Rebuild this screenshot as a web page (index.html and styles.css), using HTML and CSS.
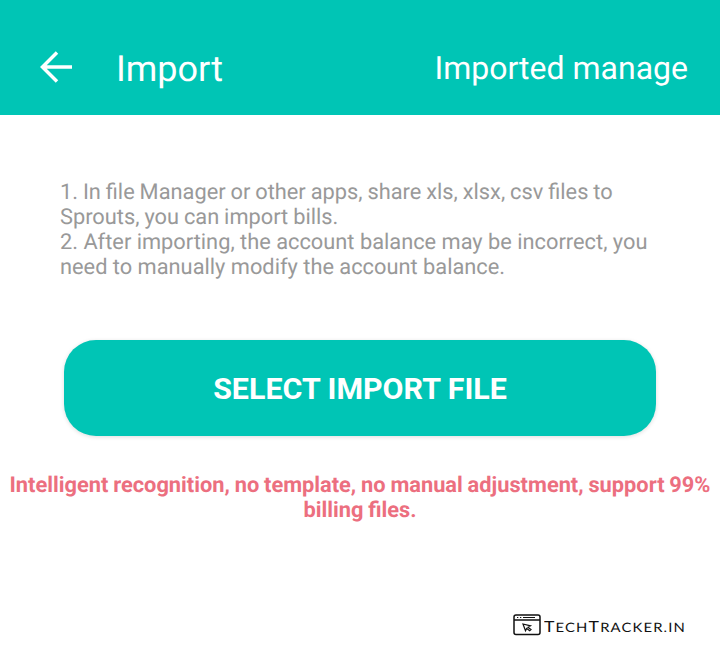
FILE: index.html
```html
<!DOCTYPE html>
<html lang="en">
<head>
<meta charset="utf-8">
<title>Import</title>
<link rel="stylesheet" href="styles.css">
</head>
<body>
<header class="bar">
  <svg class="back" viewBox="0 0 32 32" width="32" height="32"><path d="M17 1.5 2.5 16 17 30.5M3 16H32"/></svg>
  <h1 class="title">Import</h1>
  <a class="manage">Imported manage</a>
</header>
<main class="content">
  <div class="notes">
    <p class="tight">1. In file Manager or other apps, share xls, xlsx, csv files to<br>Sprouts, you can import bills.</p>
    <p>2. After importing, the account balance may be incorrect, you<br>need to manually modify the account balance.</p>
  </div>
  <button class="select">SELECT IMPORT FILE</button>
  <p class="hint">Intelligent recognition, no template, no manual adjustment, support 99%<br>billing files.</p>
</main>
<footer class="brand">
  <svg class="logo" viewBox="0 0 28 22" width="28" height="22">
    <rect x="1" y="1" width="26" height="19.5" rx="2"/><path d="M1 6H27"/><path class="dots" d="M4 3.5H5.3M7 3.5H8.3M10 3.5H22"/>
    <path class="cursor" d="m10 10 7.5 1.8-2.5 1.5 3 2.3-1.3 1.2-3-2.3-1.2 2.3Z"/>
  </svg>
  <span class="name"><b>T</b>ECH<b>T</b>RACKER.IN</span>
</footer>
</body>
</html>
```
FILE: styles.css
```css
* { box-sizing: border-box; }
body { margin: 0; height: 649px; display: flex; flex-direction: column; background: #fff; font-family: Roboto, sans-serif; overflow: hidden; text-rendering: geometricPrecision; }
h1, p { margin: 0; }
.bar { height: 115px; padding: 20px 32px 0 40px; display: flex; align-items: center; background: #00c5b5; color: #fff; }
.back { fill: none; stroke: #fff; stroke-width: 3.5; margin-top: -1px; }
.title { margin: 2px 0 0 44px; font-size: 36px; font-weight: 400; }
.manage { margin-left: auto; font-size: 32px; }
.content { flex: 1; display: flex; flex-direction: column; align-items: center; }
.notes { width: 600px; margin-top: 65px; font-size: 21.8px; line-height: 25px; color: #999; white-space: nowrap; }
.tight { word-spacing: -0.5px; }
.select { width: 592px; height: 96px; margin-top: 60px; padding: 0; border: 0; border-radius: 32px; background: #00c5b5; color: #fff; font: 700 30.4px Roboto, sans-serif; box-shadow: 0 1px 4px #0002; }
.hint { margin-top: 37px; font-size: 21.8px; font-weight: 700; line-height: 25px; word-spacing: -0.6px; color: #ec6f7f; text-align: center; white-space: nowrap; }
.brand { height: 36px; padding: 1px 0 0 513px; display: flex; align-items: flex-start; color: #111; }
.logo { fill: none; stroke: #111; stroke-width: 1.5; }
.dots { stroke-width: 1; }
.cursor { stroke-width: 1.2; }
.name { margin: 4px 0 0 3px; font: 13px/18px Lato, sans-serif; letter-spacing: 1px; white-space: nowrap; transform: scaleX(1.14); transform-origin: left; }
.name b { font-size: 15.5px; font-weight: 400; }
```
